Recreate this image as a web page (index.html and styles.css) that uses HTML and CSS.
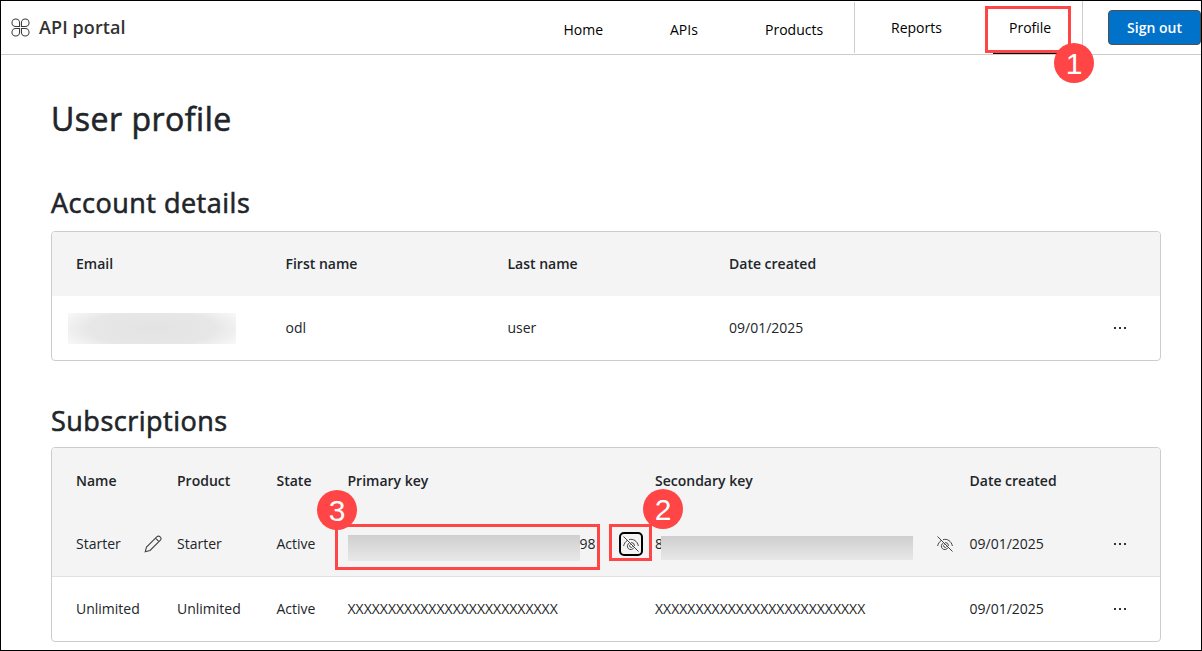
FILE: index.html
```
<!DOCTYPE html>
<html lang="en">
<head>
<meta charset="utf-8">
<title>User profile - API portal</title>
<link rel="stylesheet" href="styles.css">
</head>
<body>
<svg class="symbols" aria-hidden="true">
  <symbol id="eye-off" viewBox="0 0 16 16">
    <path d="M.5.5l15 15M.6 10C1.200 7.600 2.400 5.700 4.100 4.600M6 3.700C10.400 2.300 14.300 5.200 15.400 10M6.300 7.100a3.400 3.400 0 1 0 4.500 4.600M8.200 6.500a3.400 3.400 0 0 1 3.300 3.400"/>
    <path d="M7.500 8.500a1.500 1.500 0 1 0 2 2"/>
  </symbol>
  <symbol id="more" viewBox="0 0 14 4">
    <path d="M1 1h2v2H1zM6 1h2v2H6zM11 1h2v2h-2z"/>
  </symbol>
</svg>
<header class="topbar">
  <div class="brand">
    <svg class="brand-logo" viewBox="0 0 20 20"><path d="M9 9V5A4 4 0 1 0 5 9ZM11 9V5A4 4 0 1 1 15 9ZM9 11V15A4 4 0 1 1 5 11ZM11 11V15A4 4 0 1 0 15 11Z"/></svg>
    <span class="brand-name">API portal</span>
  </div>
  <nav class="nav">
    <a class="nav-item">Home</a>
    <a class="nav-item">APIs</a>
    <a class="nav-item">Products</a>
  </nav>
  <nav class="nav-user">
    <a class="nav-item reports">Reports</a>
    <a class="nav-item active">Profile</a>
  </nav>
  <button class="sign-out">Sign out</button>
</header>
<main class="content">
  <h1 class="title">User profile</h1>
  <h2 class="heading">Account details</h2>
  <section class="table account">
    <div class="row head"><span>Email</span><span>First name</span><span>Last name</span><span>Date created</span></div>
    <div class="row"><span><i class="redacted email"></i></span><span>odl</span><span>user</span><span>09/01/2025</span><svg class="more"><use href="#more"/></svg></div>
  </section>
  <h2 class="heading second">Subscriptions</h2>
  <section class="table subs">
    <div class="row head"><span>Name</span><span>Product</span><span>State</span><span>Primary key</span><span>Secondary key</span><span>Date created</span></div>
    <div class="row selected">
      <span class="name">Starter<svg class="pencil" viewBox="0 0 18 18"><path d="M1.200 16.800l1.300-4.800L13 1.700a2 2 0 0 1 2.900 0l.5.5a2 2 0 0 1 0 2.900L6 15.500zM11.500 3.200l3.400 3.400"/></svg></span>
      <span>Starter</span>
      <span>Active</span>
      <span class="key primary"><i class="redacted"></i>98<b class="focus"><svg class="eye"><use href="#eye-off"/></svg></b></span>
      <span class="key secondary"><span class="digit">8</span><i class="redacted"></i><svg class="eye"><use href="#eye-off"/></svg></span>
      <span>09/01/2025</span>
      <svg class="more"><use href="#more"/></svg>
    </div>
    <div class="row last"><span>Unlimited</span><span>Unlimited</span><span>Active</span><span>XXXXXXXXXXXXXXXXXXXXXXXXXX</span><span>XXXXXXXXXXXXXXXXXXXXXXXXXX</span><span>09/01/2025</span><svg class="more"><use href="#more"/></svg></div>
  </section>
</main>
<div class="callout box-1"></div><div class="badge badge-1">1</div>
<div class="callout box-2"></div><div class="badge badge-2">2</div>
<div class="callout box-3"></div><div class="badge badge-3">3</div>
</body>
</html>
```
FILE: styles.css
```
* { box-sizing: border-box; }
body {
  position: relative;
  margin: 0;
  width: 1202px;
  height: 651px;
  overflow: hidden;
  border: 1px solid #000;
  background: #fff;
  color: #212529;
  font: 14px/20px "Open Sans", "Noto Sans", sans-serif;
}
svg { display: block; fill: none; flex: none; }
.symbols { position: absolute; width: 0; height: 0; }

.topbar { display: flex; height: 54px; border-bottom: 1px solid #ccc; }
.brand { display: flex; flex: none; align-items: center; gap: 9px; width: 562.5px; padding: 0 0 1px 10px; }
.brand-logo { width: 19px; height: 19px; stroke: #3b3b3b; stroke-width: 1.1; }
.brand-name { font-size: 18px; line-height: 24px; font-weight: 600; letter-spacing: .1px; color: #333; white-space: nowrap; }
.nav { display: grid; flex: none; grid-template-columns: 106.5px 95px 90px; width: 291.5px; height: 51px; margin-top: 1px; align-items: center; border-right: 1px solid #ccc; padding-top: 4px; }
.nav-item { color: #000; }
.nav-user { display: flex; flex: none; width: 228px; height: 51px; border-right: 1px solid #ccc; margin-right: 25px; }
.nav-user .nav-item { height: 53px; padding-top: 17px; }
.reports { width: 138px; flex: none; padding-left: 36px; }
.active { width: 75px; padding-left: 16px; border-bottom: 1px solid #000; }
.sign-out { width: 93px; height: 35px; margin-top: 9px; padding: 0; border: 1px solid #505050; border-radius: 4px; background: #0072c9; color: #fff; font: 600 14px/20px "Open Sans", sans-serif; white-space: nowrap; flex: none; }

.content { padding: 42px 40px 0 50px; }
.title, .heading { font-weight: 400; -webkit-text-stroke: .6px currentColor; }
.title { margin: 0; font-size: 32px; line-height: 43px; letter-spacing: .5px; }
.heading { margin: 43px 0 8px; font-size: 27px; line-height: 40px; letter-spacing: .5px; }
.heading.second { margin: 40px 0 6px; }
.table { width: 1110px; border: 1px solid #ccc; border-radius: 4px; overflow: hidden; }
.row { display: grid; height: 64px; align-items: center; padding-left: 24px; }
.account .row { grid-template-columns: 209.5px 222px 221.5px 384px 14px; }
.subs .row { grid-template-columns: 101px 99.5px 71px 307.5px 314.5px 143.5px 14px; }
.head { background: #f4f4f4; font-weight: 600; }
.subs .head { padding-top: 2px; }
.selected { height: 65px; background: #f4f4f4; border-bottom: 1px solid #e1e1e1; }
.more { width: 14px; height: 4px; fill: #333; }
.name, .key { display: flex; align-items: center; }
.pencil { width: 18px; height: 18px; margin-left: 23px; stroke: #444; stroke-width: 1.1; }
.redacted { display: block; flex: none; }
.email { width: 168px; height: 31px; margin-left: -8px; background: radial-gradient(ellipse 58% 90% at 50% 50%, #e3e3e3 0%, #e7e7e7 65%, #f7f7f7 100%); }
.primary .redacted { width: 232px; height: 26px; margin-top: 7px; background: linear-gradient(#cfcfcf, #e8e8e8); }
.focus { display: grid; place-items: center; width: 24px; height: 24px; margin-left: 23px; border: 2px solid #000; border-radius: 5px; }
.eye { width: 16px; height: 16px; stroke: #444; stroke-width: 1; }
.digit { width: 8px; margin-right: -2.500px; }
.secondary .redacted { position: relative; width: 252px; height: 24px; margin: 7px 24px 0 0; background: linear-gradient(#cecece, #e8e8e8); }

.callout { position: absolute; border: 3px solid #ff4545; }
.badge { position: absolute; width: 40px; height: 40px; border-radius: 50%; background: #ff4545; color: #fff; text-align: center; font: 30px/42px "Liberation Sans", Arial, sans-serif; }
.box-1 { left: 984px; top: 5px; width: 86px; height: 47px; }
.badge-1 { left: 1053px; top: 42px; }
.box-2 { left: 608px; top: 523px; width: 43px; height: 37px; }
.badge-2 { left: 642px; top: 488px; }
.box-3 { left: 334px; top: 523px; width: 265px; height: 46px; }
.badge-3 { left: 316px; top: 489px; }
```
